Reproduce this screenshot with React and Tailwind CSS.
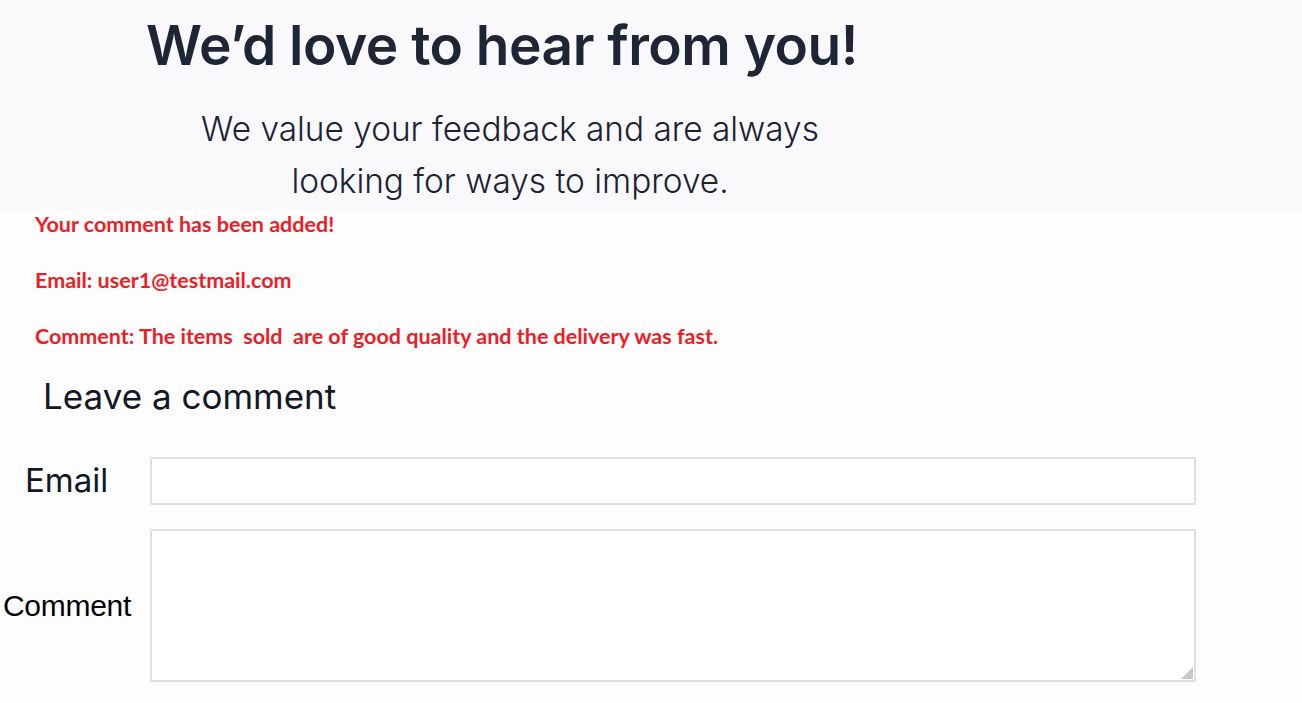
export default function App() {
  return (
    <div className="min-h-[703px] w-[1302px] overflow-hidden bg-[#fdfdfe]">
      <div className="h-[210px] w-full bg-[#f9f9fb] pt-[9px]">
        <div className="w-[1004px] text-center font-['Inter',sans-serif]">
          <h1 className="text-[55px] font-semibold leading-[72px] tracking-[-0.5px] text-[#1e2535]">
            We’d love to hear from you!
          </h1>
          <p className="mx-auto mt-[22px] w-[680px] pl-[16px] text-[33.4px] font-light leading-[52px] text-[#1a2233]">
            We value your feedback and are always looking for ways to improve.
          </p>
        </div>
      </div>

      <div className="flex flex-col gap-[32px] pl-[35px] pt-[2px] font-['Lato',sans-serif] text-[21.5px] font-bold leading-[24px] text-[#f01c24]">
        <p>Your comment has been added!</p>
        <p>Email: user1@testmail.com</p>
        <p className="whitespace-pre">Comment: The items  sold  are of good quality and the delivery was fast.</p>
      </div>

      <div className="mt-[28px] pl-[43px] font-['Inter',sans-serif] text-[35px] leading-[40px] text-[#111827]">
        Leave a comment
      </div>

      <div className="mt-[40px] grid grid-cols-[150px_1046px] items-center gap-y-[23px]">
        <label className="pl-[25px] font-['Inter',sans-serif] text-[33px] text-[#111827]">Email</label>
        <input
          type="text"
          className="h-[48px] border-2 border-[#e0e0e0] bg-white px-2 outline-none"
        />
        <label className="pl-[3px] font-['Liberation_Sans',sans-serif] text-[30px] tracking-[-0.3px] text-black">Comment</label>
        <div className="relative h-[153px]">
          <textarea className="block h-full w-full resize-none border-2 border-[#e0e0e0] bg-white p-2 outline-none" />
          <svg className="pointer-events-none absolute bottom-[3px] right-[3px]" width="12" height="12" viewBox="0 0 12 12">
            <path d="M12 0 L12 12 L0 12 Z" fill="#c8c8c8" />
          </svg>
        </div>
      </div>
    </div>
  )
}
